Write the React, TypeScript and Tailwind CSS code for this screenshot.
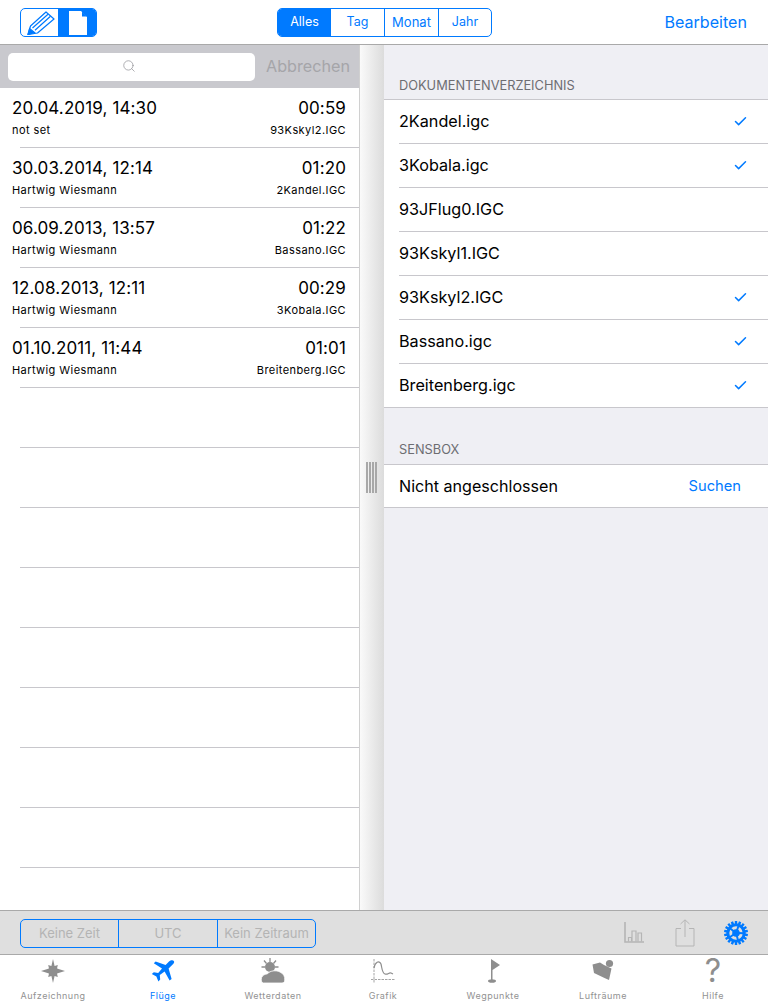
import type { ReactNode } from "react"
import { Check, Search } from "lucide-react"

const flights = [
  { date: "20.04.2019, 14:30", time: "00:59", pilot: "not set", file: "93Kskyl2.IGC" },
  { date: "30.03.2014, 12:14", time: "01:20", pilot: "Hartwig Wiesmann", file: "2Kandel.IGC" },
  { date: "06.09.2013, 13:57", time: "01:22", pilot: "Hartwig Wiesmann", file: "Bassano.IGC" },
  { date: "12.08.2013, 12:11", time: "00:29", pilot: "Hartwig Wiesmann", file: "3Kobala.IGC" },
  { date: "01.10.2011, 11:44", time: "01:01", pilot: "Hartwig Wiesmann", file: "Breitenberg.IGC" },
]

const files = [
  { name: "2Kandel.igc", checked: true },
  { name: "3Kobala.igc", checked: true },
  { name: "93JFlug0.IGC", checked: false },
  { name: "93Kskyl1.IGC", checked: false },
  { name: "93Kskyl2.IGC", checked: true },
  { name: "Bassano.igc", checked: true },
  { name: "Breitenberg.igc", checked: true },
]

const emptyRows = [0, 1, 2, 3, 4, 5, 6, 7]

function PencilIcon() {
  return (
    <svg width="28" height="24" viewBox="0 0 28 24" fill="none" stroke="#007aff" strokeWidth="1.2">
      <path d="M1 23.5 L3.5 15 L19 1 L27 8 L10.5 22 Z" strokeLinejoin="round" />
      <path d="M5.5 17 L21 3.2 M8 19.2 L23.5 5.2" />
      <path d="M1 23.5 L2.6 17.5 L7.5 21.6 Z" fill="#007aff" />
    </svg>
  )
}

function PageIcon() {
  return (
    <svg width="18" height="24" viewBox="0 0 18 24">
      <path d="M0 0 H12 L18 6 V24 H0 Z" fill="#fff" />
      <path d="M13 0.5 L18 5.5 H13 Z" fill="#007aff" />
    </svg>
  )
}

function CompassIcon() {
  return (
    <svg width="24" height="24" viewBox="0 0 24 24" fill="#8e8e8e">
      <path d="M12 0 L13.6 7 L16.8 6 L16 9.4 L24 12 L16 14.6 L16.8 18 L13.6 17 L12 24 L10.4 17 L7.2 18 L8 14.6 L0 12 L8 9.4 L7.2 6 L10.4 7 Z" />
      <circle cx="12" cy="12" r="4.8" />
    </svg>
  )
}

function PlaneIcon() {
  return (
    <svg width="24" height="24" viewBox="0 0 24 24" fill="#007aff">
      <path d="M23 2.2 C22 0.8 19.6 1.2 18 2.6 L14.6 6 L4.6 2.6 L2.8 4.2 L11 9.6 L7.2 14 L2.8 13.2 L0.8 15 L5.4 17.6 L7.4 22.4 L9.2 20.6 L8.8 16 L13.6 12.4 L18.6 21.6 L20.6 20 L17.6 9.4 L21.4 5.8 C22.6 4.8 23.6 3.4 23 2.2 Z" />
    </svg>
  )
}

function WeatherIcon() {
  return (
    <svg width="24" height="26" viewBox="0 0 24 26" fill="#8e8e8e">
      <circle cx="9" cy="9" r="5" />
      <path d="M9 0 V4 M3 2.5 L5.5 5.5 M15 2.5 L12.5 5.5 M0.5 9 H4 M17.5 9 H14" stroke="#8e8e8e" strokeWidth="1.3" />
      <path d="M2.5 25 C0 25 0 21.5 0.6 19.5 C1.5 17 4 16.2 6.5 15.8 C9 12.5 15 12 19 14 C22.5 15.5 24 18.5 23.8 22 C23.7 24 22.6 25 21 25 Z" stroke="#fff" strokeWidth="0.8" />
    </svg>
  )
}

function GraphIcon() {
  return (
    <svg width="24" height="24" viewBox="0 0 24 24" fill="none" stroke="#8e8e8e" strokeWidth="1">
      <path d="M3 0 V24 M0 20.5 H24" strokeWidth="0.8" strokeDasharray="2.5 1" />
      <path d="M3 9 C4 3 8 1 10 5 C11 9 11 14 14 15 C17 16 18 13 20 14 L22 15" strokeWidth="1.2" />
    </svg>
  )
}

function FlagIcon() {
  return (
    <svg width="24" height="24" viewBox="0 0 24 24" fill="#8e8e8e">
      <path d="M10 0 L19 6 L11.5 11 V21 H10 Z" />
      <ellipse cx="11" cy="22" rx="4" ry="1.8" />
    </svg>
  )
}

function AirspaceIcon() {
  return (
    <svg width="24" height="24" viewBox="0 0 24 24" fill="#8e8e8e">
      <path d="M1.5 5.5 L9 3.5 L13 6 L20.5 9.5 L18 21 L13.5 19 L3 14 Z" />
      <circle cx="18.5" cy="4.5" r="3.6" />
    </svg>
  )
}

function HelpIcon() {
  return (
    <span className="text-[32px] leading-[24px] font-normal text-[#8e8e8e]">?</span>
  )
}

function ChartIcon() {
  return (
    <svg width="22" height="24" viewBox="0 0 22 24" fill="none" stroke="#b5b5b5" strokeWidth="1.2">
      <path d="M1 1 V21 H20" strokeWidth="1.6" />
      <path d="M4.5 20.5 V16.5 H7.5 V20.5 M8 20.5 V10 H12 V20.5 M14 20.5 V12 H17.5 V20.5" />
    </svg>
  )
}

function ShareIcon() {
  return (
    <svg width="20" height="28" viewBox="0 0 20 28" fill="none" stroke="#b5b5b5" strokeWidth="1">
      <path d="M6 9.5 H1 V27 H19 V9.5 H14" />
      <path d="M10 18 V1 M5.5 5 L10 0.8 L14.5 5" />
    </svg>
  )
}

function GearIcon() {
  const teeth = Array.from({ length: 18 }, (_, i) => i * 20)
  const spokes = [0, 72, 144, 216, 288]
  return (
    <svg width="24" height="24" viewBox="0 0 24 24">
      {teeth.map((deg) => (
        <rect key={deg} x="10.8" y="0" width="2.4" height="3.5" fill="#007aff" transform={`rotate(${deg} 12 12)`} />
      ))}
      <circle cx="12" cy="12" r="8.2" fill="none" stroke="#007aff" strokeWidth="3" />
      <circle cx="12" cy="12" r="3.8" fill="#007aff" />
      {spokes.map((deg) => (
        <rect key={deg} x="11" y="3.5" width="2" height="8" fill="#007aff" transform={`rotate(${deg + 20} 12 12)`} />
      ))}
    </svg>
  )
}

function TabItem({ label, active, children }: { label: string; active?: boolean; children: ReactNode }) {
  return (
    <div className="flex w-[110px] shrink-0 flex-col items-center">
      <div className="flex h-[24px] w-[24px] items-center justify-center">{children}</div>
      <span className={`mt-[7px] whitespace-nowrap text-[9px] leading-[11px] tracking-[0.5px] ${active ? "text-[#007aff]" : "text-[#929292]"}`}>
        {label}
      </span>
    </div>
  )
}

export default function App() {
  return (
    <div className="flex h-[1004px] w-[768px] flex-col overflow-hidden bg-white font-['Inter',sans-serif] text-black">
      {/* top bar */}
      <header className="relative flex h-[45px] shrink-0 items-start justify-between border-b border-[#a9a9a9] bg-white pl-[20px] pr-[21px] pt-[8px]">
        <div className="flex h-[29px] w-[77px] overflow-hidden rounded-[5px] border border-[#007aff]">
          <div className="flex w-[37px] items-center justify-start pl-[6px]">
            <PencilIcon />
          </div>
          <div className="flex flex-1 items-center justify-start bg-[#007aff] pl-[11px]">
            <PageIcon />
          </div>
        </div>
        <div className="absolute left-[277px] top-[8px] flex h-[29px] w-[215px] overflow-hidden rounded-[5px] border border-[#007aff] text-[13px] text-[#007aff]">
          <div className="flex w-[53px] items-center justify-center bg-[#007aff] text-[12.5px] text-white">Alles</div>
          <div className="flex w-[54px] items-center justify-center border-r border-[#007aff] text-[12.5px]">Tag</div>
          <div className="flex w-[54px] items-center justify-center border-r border-[#007aff]">Monat</div>
          <div className="flex flex-1 items-center justify-center text-[12.5px]">Jahr</div>
        </div>
        <span className="pt-[3px] text-[16.1px] leading-[22px] text-[#007aff]">Bearbeiten</span>
      </header>

      <div className="flex min-h-0 flex-1">
        {/* flight list */}
        <div className="w-[359px] shrink-0 overflow-hidden">
          <div className="flex h-[43px] items-center gap-[11px] bg-[#c9c9ce] pl-[8px]">
            <div className="flex h-[28px] w-[247px] items-center justify-center rounded-[5px] bg-white pb-[2px] pr-[6px]">
              <Search size={14} strokeWidth={1.2} className="text-[#8e8e93]" />
            </div>
            <span className="text-[16.2px] text-[#a5a5a9]">Abbrechen</span>
          </div>
          {flights.map((f) => (
            <div key={f.file} className="h-[60px]">
              <div className="flex h-[59px] flex-col pl-[12px] pr-[13px] pt-[9px]">
                <div className="flex justify-between text-[17px] leading-[22px] tracking-[0.12px]">
                  <span>{f.date}</span>
                  <span>{f.time}</span>
                </div>
                <div className="mt-[3px] flex justify-between text-[11px] leading-[16px] tracking-[0.42px]">
                  <span>{f.pilot}</span>
                  <span>{f.file}</span>
                </div>
              </div>
              <div className="ml-[20px] h-px bg-[#c8c7cc]" />
            </div>
          ))}
          {emptyRows.map((r) => (
            <div key={r} className="flex h-[60px] flex-col justify-end">
              <div className="ml-[20px] h-px bg-[#c8c7cc]" />
            </div>
          ))}
        </div>

        {/* split handle */}
        <div className="flex w-[25px] shrink-0 items-center justify-center border-l border-[#d0d0d0] bg-gradient-to-r from-[#fafafa] to-[#dcdcdc]">
          <div className="mr-[2px] flex h-[31px] gap-[1px]">
            <div className="w-[2px] bg-[#a8a8a8]" />
            <div className="w-[2px] bg-[#a8a8a8]" />
            <div className="w-[2px] bg-[#a8a8a8]" />
            <div className="w-[2px] bg-[#a8a8a8]" />
          </div>
        </div>

        {/* settings */}
        <div className="flex-1 bg-[#efeff4]">
          <div className="px-[15px] pt-[33px] text-[12.8px] leading-[16px] text-[#6d6d72]">DOKUMENTENVERZEICHNIS</div>
          <div className="mt-[5px] border-y border-[#c8c7cc] bg-white">
            {files.map((f, i) => (
              <div key={f.name}>
                <div className="flex h-[43px] items-center justify-between pl-[15px] pr-[20px] text-[16.2px]">
                  <span>{f.name}</span>
                  {f.checked && <Check size={15} strokeWidth={2.4} className="text-[#007aff]" />}
                </div>
                {i < files.length - 1 && <div className="ml-[15px] h-px bg-[#c8c7cc]" />}
              </div>
            ))}
          </div>
          <div className="px-[15px] pt-[34px] text-[12.8px] leading-[16px] text-[#6d6d72]">SENSBOX</div>
          <div className="mt-[6px] flex h-[44px] items-center justify-between border-y border-[#c8c7cc] bg-white pl-[15px] pr-[27px]">
            <span className="text-[16.1px]">Nicht angeschlossen</span>
            <span className="text-[14.7px] text-[#007aff]">Suchen</span>
          </div>
        </div>
      </div>

      {/* bottom toolbar */}
      <div className="flex h-[45px] shrink-0 items-center justify-between border-y border-[#a9a9a9] bg-[#dfdfdf] pl-[20px] pr-[20px]">
        <div className="mt-[2px] flex h-[29px] w-[296px] rounded-[5px] border border-[#007aff] text-[13px] text-[#b4b4b4]">
          <div className="flex w-[98px] items-center justify-center border-r border-[#007aff]">Keine Zeit</div>
          <div className="flex w-[99px] items-center justify-center border-r border-[#007aff]">UTC</div>
          <div className="flex flex-1 items-center justify-center whitespace-nowrap">Kein Zeitraum</div>
        </div>
        <div className="flex items-center">
          <ChartIcon />
          <div className="ml-[29px]">
            <ShareIcon />
          </div>
          <div className="ml-[29px]">
            <GearIcon />
          </div>
        </div>
      </div>

      {/* tab bar */}
      <nav className="ml-[-2px] flex h-[49px] shrink-0 bg-white pt-[4px]">
        <TabItem label="Aufzeichnung"><CompassIcon /></TabItem>
        <TabItem label="Flüge" active><PlaneIcon /></TabItem>
        <TabItem label="Wetterdaten"><WeatherIcon /></TabItem>
        <TabItem label="Grafik"><GraphIcon /></TabItem>
        <TabItem label="Wegpunkte"><FlagIcon /></TabItem>
        <TabItem label="Lufträume"><AirspaceIcon /></TabItem>
        <TabItem label="Hilfe"><HelpIcon /></TabItem>
      </nav>
    </div>
  )
}
